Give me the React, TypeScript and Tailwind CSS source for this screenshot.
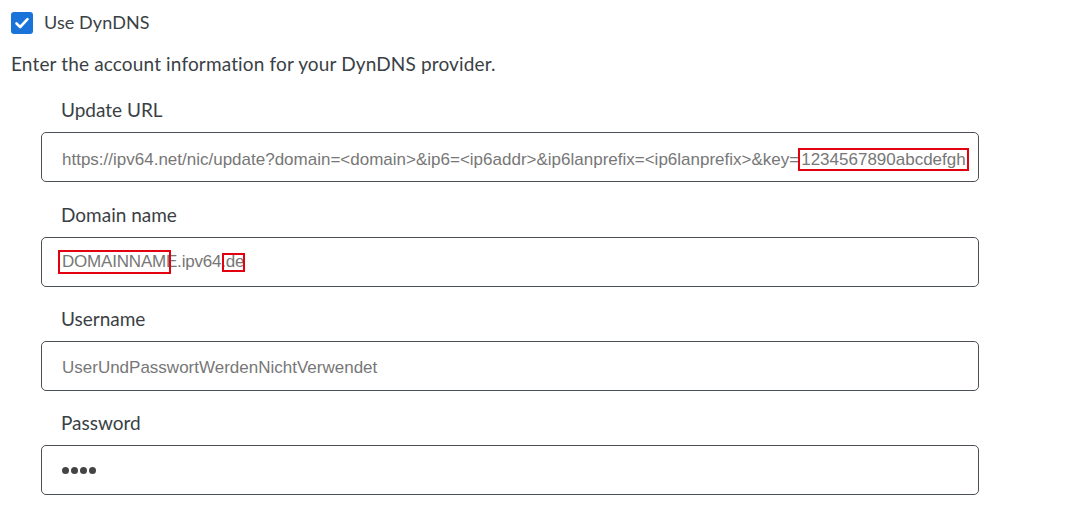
import React from "react";

const labelCls =
  "pl-[20px] h-[24px] leading-[24px] text-[19px] text-[#3a3f45] mb-[10px]";
const inputCls =
  "relative h-[50px] w-[938px] rounded-[5px] border border-[#4b5056] bg-white flex items-center pl-[20px] text-[17px] text-[#777777]";
const arial = { fontFamily: '"Liberation Sans", Arial, sans-serif' };

export default function App() {
  return (
    <div
      className="w-[1074px] h-[512px] bg-white overflow-hidden pt-[11px] pl-[11px]"
      style={{ fontFamily: 'Lato, "Open Sans", sans-serif' }}
    >
      <div className="flex items-center h-[23px] gap-[11px]">
        <div className="w-[22px] h-[22px] rounded-[3px] bg-[#1a73d9] flex items-center justify-center">
          <svg width="16" height="16" viewBox="0 0 16 16" fill="none">
            <path
              d="M2.5 8.5 L6.2 12 L13.5 4.2"
              stroke="white"
              strokeWidth="2.6"
              strokeLinecap="round"
              strokeLinejoin="round"
            />
          </svg>
        </div>
        <span className="text-[18px] text-[#3a3f45] leading-[23px] tracking-[0.1px]">Use DynDNS</span>
      </div>

      <div className="mt-[18px] h-[24px] leading-[24px] text-[19px] text-[#3a3f45] tracking-[0.15px]">
        Enter the account information for your DynDNS provider.
      </div>

      <div className="pl-[30px] mt-[22px]">
        <div className={labelCls}>Update URL</div>
        <div className={inputCls} style={arial}>
          <span className="pt-[6px] whitespace-nowrap">
            https://ipv64.net/nic/update?domain=&lt;domain&gt;&amp;ip6=&lt;ip6addr&gt;&amp;ip6lanprefix=&lt;ip6lanprefix&gt;&amp;key=
            <span className="inline-block border-2 border-[#e3000f] leading-[19px] px-[1px] -ml-[1px]">
              1234567890abcdefgh
            </span>
          </span>
        </div>

        <div className={labelCls + " mt-[21px]"}>Domain name</div>
        <div className={inputCls} style={arial}>
          <span className="tracking-[-0.2px]">DOMAINNAME.ipv64.de</span>
          <div className="absolute left-[16px] top-[12px] w-[113px] h-[24px] border-2 border-[#e3000f]" />
          <div className="absolute left-[180px] top-[15px] w-[23px] h-[19px] border-2 border-[#e3000f]" />
        </div>

        <div className={labelCls + " mt-[20px]"}>Username</div>
        <div className={inputCls} style={arial}>
          <span className="pt-[4px]">UserUndPasswortWerdenNichtVerwendet</span>
        </div>

        <div className={labelCls + " mt-[20px]"}>Password</div>
        <div className={inputCls + " pl-[16px]"}>
          <div className="flex gap-[2px]">
            <span className="w-[7px] h-[7px] rounded-full bg-[#444444]" />
            <span className="w-[7px] h-[7px] rounded-full bg-[#444444]" />
            <span className="w-[7px] h-[7px] rounded-full bg-[#444444]" />
            <span className="w-[7px] h-[7px] rounded-full bg-[#444444]" />
          </div>
        </div>
      </div>
    </div>
  );
}
